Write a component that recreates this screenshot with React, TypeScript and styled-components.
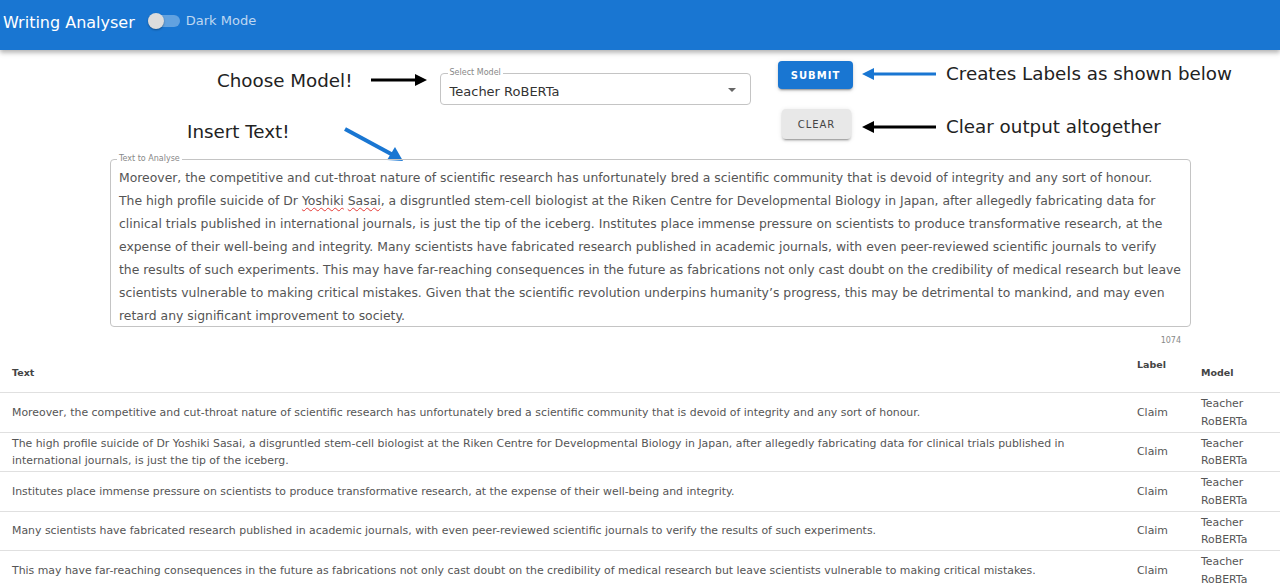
import React from 'react';
import styled, { createGlobalStyle } from 'styled-components';

const GlobalStyle = createGlobalStyle`
  body {
    margin: 0;
    background: #fff;
    font-family: "DejaVu Sans", "Noto Sans", sans-serif;
  }
`;

const AppBar = styled.header`
  height: 50px;
  background: #1976d2;
  display: flex;
  align-items: flex-start;
  padding: 11px 0 0 3px;
  box-sizing: border-box;
  box-shadow: 0 2px 4px rgba(0, 0, 0, 0.2), 0 4px 5px rgba(0, 0, 0, 0.12);
  position: relative;
  z-index: 1;
`;

const Title = styled.h1`
  margin: 0;
  font-size: 16px;
  font-weight: 400;
  color: #fff;
  line-height: 24px;
`;

const SwitchWrap = styled.label`
  display: flex;
  align-items: center;
  margin-left: 13px;
  margin-top: 2px;
  gap: 6px;
  color: rgba(255, 255, 255, 0.72);
  font-size: 13px;
`;

const Track = styled.span`
  position: relative;
  width: 32px;
  height: 12px;
  border-radius: 6px;
  background: rgba(255, 255, 255, 0.32);
  display: inline-block;
`;

const Thumb = styled.span`
  position: absolute;
  left: 0;
  top: -2px;
  width: 16px;
  height: 16px;
  border-radius: 50%;
  background: #dcdcdc;
  box-shadow: 0 1px 2px rgba(0, 0, 0, 0.35);
`;

const Controls = styled.section`
  display: flex;
  align-items: flex-start;
  height: 109px;
`;

const LeftCol = styled.div`
  width: 778px;
  display: flex;
  flex-direction: column;
`;

const AnnotRow = styled.div<{ $indent: number; $top?: number }>`
  display: flex;
  align-items: flex-start;
  padding-left: ${p => p.$indent}px;
  margin-top: ${p => p.$top ?? 0}px;
`;

const Note = styled.span<{ $top?: number }>`
  font-size: 18.3px;
  line-height: 21px;
  color: #222;
  white-space: nowrap;
  margin-top: ${p => p.$top ?? 0}px;
`;

const Drawn = styled.span<{ $left: number; $top: number }>`
  display: block;
  line-height: 0;
  margin-left: ${p => p.$left}px;
  margin-top: ${p => p.$top}px;
`;

const SelectBox = styled.div`
  position: relative;
  width: 311px;
  height: 32px;
  margin-left: 13px;
  margin-top: 23px;
  border: 1px solid #c4c4c4;
  border-radius: 4px;
  box-sizing: border-box;
  display: flex;
  align-items: center;
  padding: 5px 0 0 9px;
  font-size: 13px;
  color: #333;
`;

const FloatLabel = styled.span`
  position: absolute;
  top: -6px;
  left: 7px;
  padding: 0 2px;
  background: #fff;
  font-size: 8px;
  color: #888;
  line-height: 10px;
`;

const Caret = styled.span`
  position: absolute;
  right: 14px;
  top: 14px;
  width: 0;
  height: 0;
  border-left: 4px solid transparent;
  border-right: 4px solid transparent;
  border-top: 4px solid #666;
`;

const RightCol = styled.div`
  display: grid;
  grid-template-columns: 84px auto;
  row-gap: 20px;
  align-items: center;
  margin-top: 11px;
`;

const ActionButton = styled.button<{ $primary?: boolean }>`
  font-family: inherit;
  font-size: 10px;
  letter-spacing: 1px;
  border: none;
  border-radius: 4px;
  cursor: pointer;
  padding: 0;
  background: ${p => (p.$primary ? '#1976d2' : '#e8e8e8')};
  color: ${p => (p.$primary ? '#fff' : '#444')};
  width: ${p => (p.$primary ? 75 : 69)}px;
  height: ${p => (p.$primary ? 28 : 30)}px;
  margin-left: ${p => (p.$primary ? 0 : 4)}px;
  font-weight: ${p => (p.$primary ? 700 : 400)};
  box-shadow: 0 3px 1px -2px rgba(0, 0, 0, 0.2), 0 2px 2px rgba(0, 0, 0, 0.14),
    0 1px 5px rgba(0, 0, 0, 0.12);
`;

const Pointer = styled.div<{ $shift?: number }>`
  display: flex;
  align-items: center;
  gap: 10px;
  margin-top: ${p => p.$shift ?? 0}px;
`;

const Field = styled.div`
  position: relative;
  margin-left: 110px;
  width: 1081px;
  height: 168px;
  border: 1px solid #c4c4c4;
  border-radius: 4px;
  box-sizing: border-box;
  padding: 6px 0 0 8px;
`;

const FieldLabel = styled(FloatLabel)`
  left: 6px;
`;

const Line = styled.div`
  font-size: 12.4px;
  line-height: 23px;
  color: #555;
  white-space: nowrap;
`;

const Misspelt = styled.span`
  text-decoration: underline wavy #e53935;
  text-decoration-thickness: 1px;
  text-underline-offset: 2px;
`;

const Counter = styled.div`
  width: 1181px;
  text-align: right;
  font-size: 8px;
  color: #888;
  margin-top: 9px;
`;

const Table = styled.table`
  width: 100%;
  border-collapse: collapse;
  margin-top: 10px;
  table-layout: fixed;
`;

const Th = styled.th<{ $w?: number; $top?: boolean }>`
  text-align: left;
  font-size: 9.5px;
  font-weight: 700;
  color: #444;
  padding: ${p => (p.$top ? '4px 12px 20px' : '12px 12px 14px')};
  vertical-align: ${p => (p.$top ? 'top' : 'bottom')};
  width: ${p => (p.$w ? `${p.$w - 24}px` : 'auto')};
  border-bottom: 1px solid #e0e0e0;
`;

const Td = styled.td`
  font-size: 10.9px;
  line-height: 17.5px;
  color: #555;
  padding: 2px 12px 1.5px;
  height: 35px;
  border-bottom: 1px solid #e0e0e0;
  vertical-align: middle;
`;

function LeftArrow({ color }: { color: string }) {
  return (
    <svg width="74" height="14" viewBox="0 0 74 14">
      <line x1="10" y1="7" x2="74" y2="7" stroke={color} strokeWidth="3" />
      <polygon points="0,7 12,1 12,13" fill={color} />
    </svg>
  );
}

function RightArrow() {
  return (
    <svg width="56" height="14" viewBox="0 0 56 14">
      <line x1="0" y1="7" x2="46" y2="7" stroke="#000" strokeWidth="3" />
      <polygon points="56,7 44,1 44,13" fill="#000" />
    </svg>
  );
}

function DiagonalArrow() {
  return (
    <svg width="62" height="36" viewBox="0 0 62 36">
      <line x1="2" y1="3" x2="50" y2="29" stroke="#1976d2" strokeWidth="4" />
      <polygon points="60,35 44,34 52,21" fill="#1976d2" />
    </svg>
  );
}

const passage = [
  'Moreover, the competitive and cut-throat nature of scientific research has unfortunately bred a scientific community that is devoid of integrity and any sort of honour.',
  null,
  'clinical trials published in international journals, is just the tip of the iceberg. Institutes place immense pressure on scientists to produce transformative research, at the',
  'expense of their well-being and integrity. Many scientists have fabricated research published in academic journals, with even peer-reviewed scientific journals to verify',
  'the results of such experiments. This may have far-reaching consequences in the future as fabrications not only cast doubt on the credibility of medical research but leave',
  'scientists vulnerable to making critical mistakes. Given that the scientific revolution underpins humanity\u2019s progress, this may be detrimental to mankind, and may even',
  'retard any significant improvement to society.',
];

const rows = [
  'Moreover, the competitive and cut-throat nature of scientific research has unfortunately bred a scientific community that is devoid of integrity and any sort of honour.',
  'The high profile suicide of Dr Yoshiki Sasai, a disgruntled stem-cell biologist at the Riken Centre for Developmental Biology in Japan, after allegedly fabricating data for clinical trials published in international journals, is just the tip of the iceberg.',
  'Institutes place immense pressure on scientists to produce transformative research, at the expense of their well-being and integrity.',
  'Many scientists have fabricated research published in academic journals, with even peer-reviewed scientific journals to verify the results of such experiments.',
  'This may have far-reaching consequences in the future as fabrications not only cast doubt on the credibility of medical research but leave scientists vulnerable to making critical mistakes.',
];

export default function App() {
  return (
    <>
      <GlobalStyle />
      <AppBar>
        <Title>Writing Analyser</Title>
        <SwitchWrap>
          <Track>
            <Thumb />
          </Track>
          Dark Mode
        </SwitchWrap>
      </AppBar>

      <Controls>
        <LeftCol>
          <AnnotRow $indent={217}>
            <Note $top={20}>Choose Model!</Note>
            <Drawn $left={18} $top={23}>
              <RightArrow />
            </Drawn>
            <SelectBox>
              <FloatLabel>Select Model</FloatLabel>
              Teacher RoBERTa
              <Caret />
            </SelectBox>
          </AnnotRow>
          <AnnotRow $indent={187} $top={16}>
            <Note>Insert Text!</Note>
            <Drawn $left={53} $top={5}>
              <DiagonalArrow />
            </Drawn>
          </AnnotRow>
        </LeftCol>
        <RightCol>
          <ActionButton $primary>SUBMIT</ActionButton>
          <Pointer $shift={-3}>
            <LeftArrow color="#1976d2" />
            <Note>Creates Labels as shown below</Note>
          </Pointer>
          <ActionButton>CLEAR</ActionButton>
          <Pointer $shift={5}>
            <LeftArrow color="#000" />
            <Note>Clear output altogether</Note>
          </Pointer>
        </RightCol>
      </Controls>

      <Field>
        <FieldLabel>Text to Analyse</FieldLabel>
        {passage.map((l, i) =>
          l === null ? (
            <Line key={i}>
              The high profile suicide of Dr <Misspelt>Yoshiki</Misspelt> <Misspelt>Sasai</Misspelt>, a disgruntled
              stem-cell biologist at the Riken Centre for Developmental Biology in Japan, after allegedly fabricating data for
            </Line>
          ) : (
            <Line key={i}>{l}</Line>
          )
        )}
      </Field>
      <Counter>1074</Counter>

      <Table>
        <thead>
          <tr>
            <Th>Text</Th>
            <Th $w={64} $top>
              Label
            </Th>
            <Th $w={91}>Model</Th>
          </tr>
        </thead>
        <tbody>
          {rows.map((r, i) => (
            <tr key={i}>
              <Td>{r}</Td>
              <Td>Claim</Td>
              <Td>Teacher RoBERTa</Td>
            </tr>
          ))}
        </tbody>
      </Table>
    </>
  );
}
